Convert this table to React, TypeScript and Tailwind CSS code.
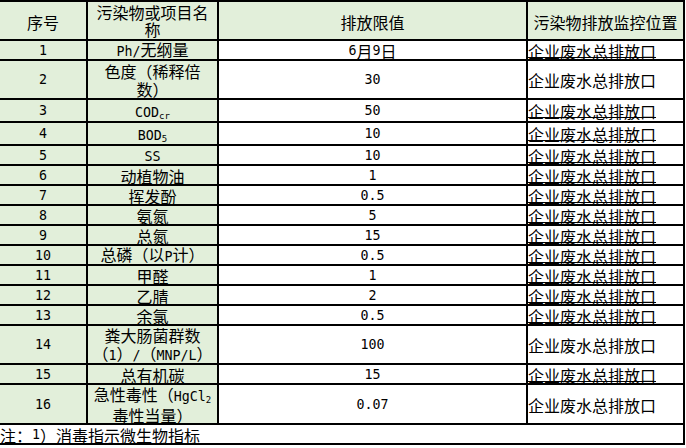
import React from 'react';

// Latin runs use a monospace face so they get the half-width look of the original
const L = ({ children }: { children: React.ReactNode }) => (
  <span className="font-['DejaVu_Sans_Mono',monospace] text-[13.3px]">{children}</span>
);

const Sub = ({ children }: { children: React.ReactNode }) => (
  <sub className="font-['DejaVu_Sans_Mono',monospace] text-[9px] relative top-[2px] align-baseline">
    {children}
  </sub>
);

type Row = {
  no: string;
  name: React.ReactNode;
  value: React.ReactNode;
  tall?: boolean;
};

const rows: Row[] = [
  { no: '1', name: <><L>Ph/</L>无纲量</>, value: <><L>6</L>月<L>9</L>日</> },
  { no: '2', name: <>色度（稀释倍<br />数）</>, value: <L>30</L>, tall: true },
  { no: '3', name: <><L>COD</L><Sub>cr</Sub></>, value: <L>50</L> },
  { no: '4', name: <><L>BOD</L><Sub>5</Sub></>, value: <L>10</L> },
  { no: '5', name: <L>SS</L>, value: <L>10</L> },
  { no: '6', name: '动植物油', value: <L>1</L> },
  { no: '7', name: '挥发酚', value: <L>0.5</L> },
  { no: '8', name: '氨氮', value: <L>5</L> },
  { no: '9', name: '总氮', value: <L>15</L> },
  { no: '10', name: <>总磷（以<L>P</L>计）</>, value: <L>0.5</L> },
  { no: '11', name: '甲醛', value: <L>1</L> },
  { no: '12', name: '乙腈', value: <L>2</L> },
  { no: '13', name: '余氯', value: <L>0.5</L> },
  { no: '14', name: <>粪大肠菌群数<br />（<L>1</L>）<L>/</L>（<L>MNP/L</L>）</>, value: <L>100</L>, tall: true },
  { no: '15', name: '总有机碳', value: <L>15</L> },
  { no: '16', name: <>急性毒性（<L>HgCl</L><Sub>2</Sub><br />毒性当量）</>, value: <L>0.07</L>, tall: true },
];

const green = 'bg-[#e2efda]';

export default function App() {
  return (
    <div className="w-[686px] h-[448px] bg-white font-['Noto_Sans_CJK_SC',sans-serif] text-[16px] leading-[18px] text-black">
      <div className="grid w-[685px] gap-[2px] bg-black pt-[2px] pr-[2px] pb-[2px] grid-cols-[86px_129px_307px_155px] grid-rows-[37px_18px_37px_21px_21px_repeat(9,18px)_37px_18px_38px_18px]">
        {/* Header */}
        <div className={`${green} flex items-center justify-center pt-[2px]`}>序号</div>
        <div className={`${green} flex items-center justify-center text-center whitespace-nowrap leading-[17px] pt-[1px]`}>
          污染物或项目名<br />称
        </div>
        <div className={`${green} flex items-center justify-center pt-[3px]`}>排放限值</div>
        <div className={`${green} flex items-center justify-center whitespace-nowrap pt-[3px]`}>污染物排放监控位置</div>

        {rows.map((r) => (
          <React.Fragment key={r.no}>
            <div className={`${green} flex items-center justify-center pt-[1px]`}>
              <L>{r.no}</L>
            </div>
            <div className={`${green} flex items-center justify-center text-center whitespace-nowrap pt-[1px]`}>
              <div>{r.name}</div>
            </div>
            <div className="bg-white flex items-center justify-center whitespace-nowrap pt-[1px]">{r.value}</div>
            <div className={`bg-white flex items-center justify-start whitespace-nowrap pt-[1px] ${r.tall ? '' : 'underline underline-offset-[-1px]'}`}>
              企业废水总排放口
            </div>
          </React.Fragment>
        ))}

        {/* Note */}
        <div className="col-span-4 bg-white flex items-center whitespace-nowrap pt-[1px]">
          注：<L>1</L>）消毒指示微生物指标
        </div>
      </div>
    </div>
  );
}
